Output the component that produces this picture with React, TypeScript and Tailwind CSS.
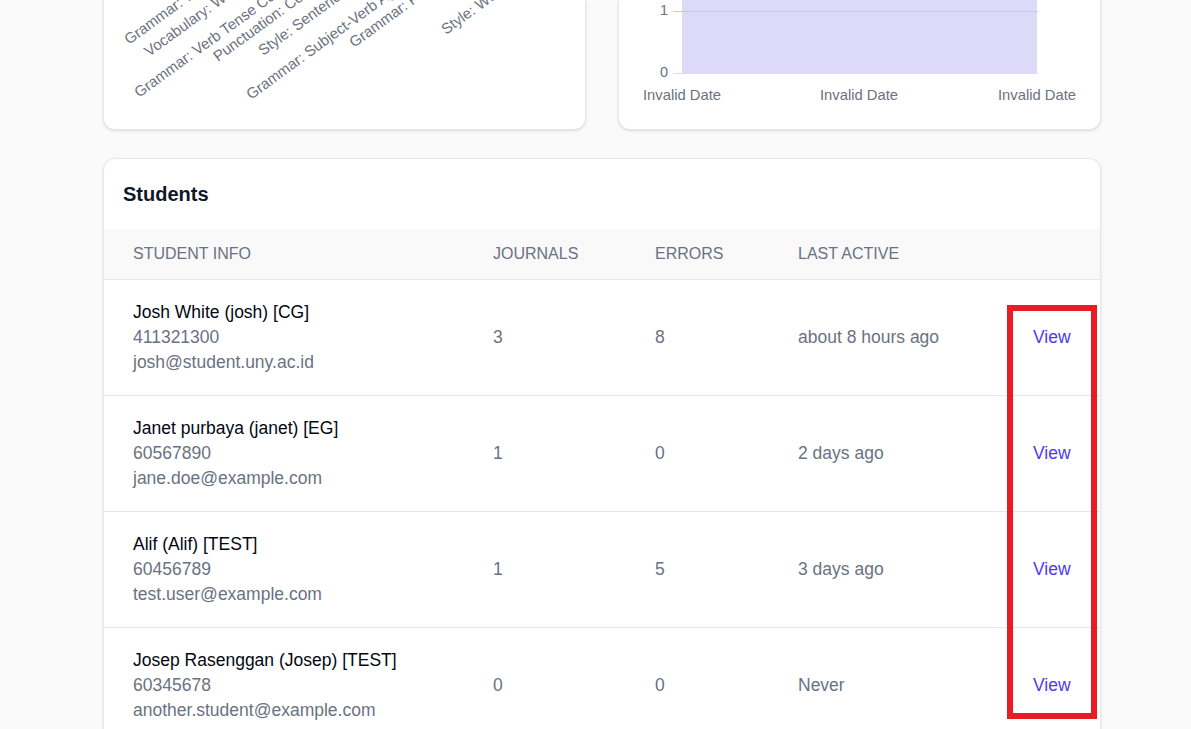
import React from "react";

interface Student {
    name: string;
    id: string;
    email: string;
    journals: number;
    errors: number;
    lastActive: string;
}

const students: Student[] = [
    { name: "Josh White (josh) [CG]", id: "411321300", email: "josh@student.uny.ac.id", journals: 3, errors: 8, lastActive: "about 8 hours ago" },
    { name: "Janet purbaya (janet) [EG]", id: "60567890", email: "jane.doe@example.com", journals: 1, errors: 0, lastActive: "2 days ago" },
    { name: "Alif (Alif) [TEST]", id: "60456789", email: "test.user@example.com", journals: 1, errors: 5, lastActive: "3 days ago" },
    { name: "Josep Rasenggan (Josep) [TEST]", id: "60345678", email: "another.student@example.com", journals: 0, errors: 0, lastActive: "Never" },
];

// rotated category labels, start of baseline in chart coords
const categoryLabels = [
    { text: "Grammar: Word Order", x: 25, y: 45 },
    { text: "Vocabulary: Word Choice", x: 45, y: 57 },
    { text: "Grammar: Verb Tense Consistency", x: 35, y: 98 },
    { text: "Punctuation: Comma Usage", x: 114, y: 62 },
    { text: "Style: Sentence Structure", x: 159, y: 56 },
    { text: "Grammar: Subject-Verb Agreement", x: 147, y: 100 },
    { text: "Grammar: Prepositions", x: 250, y: 48 },
    { text: "Style: Wordiness", x: 342, y: 35 },
];

const ErrorCategoryChart = () => (
    <svg width="483" height="129" className="block">
        {categoryLabels.map((l) => (
            <text
                key={l.text}
                transform={`translate(${l.x} ${l.y}) rotate(-36)`}
                fontSize="15"
                fill="#6b7280"
                fontFamily="Liberation Sans, Arial, sans-serif"
            >
                {l.text}
            </text>
        ))}
    </svg>
);

const ActivityChart = () => (
    <svg width="483" height="129" className="block" fontFamily="Liberation Sans, Arial, sans-serif">
        <rect x="63" y="0" width="355" height="73" fill="#dcdaf8" />
        <line x1="54" y1="11.5" x2="419" y2="11.5" stroke="#c9c7ee" strokeWidth="1" />
        <line x1="54" y1="73.5" x2="419" y2="73.5" stroke="#dcdcec" strokeWidth="1" />
        <text x="49" y="15" textAnchor="end" fontSize="14.5" fill="#6b7280">1</text>
        <text x="49" y="77" textAnchor="end" fontSize="14.5" fill="#6b7280">0</text>
        <text x="63" y="100" textAnchor="middle" fontSize="14.8" fill="#6b7280">Invalid Date</text>
        <text x="240" y="100" textAnchor="middle" fontSize="14.8" fill="#6b7280">Invalid Date</text>
        <text x="418" y="100" textAnchor="middle" fontSize="14.8" fill="#6b7280">Invalid Date</text>
    </svg>
);

const App = () => {
    return (
        <div
            className="min-h-[729px] bg-[#fafafa] text-gray-900"
            style={{ fontFamily: '"Liberation Sans", Arial, sans-serif' }}
        >
            <div className="relative ml-[103px] w-[998px]">
                {/* Charts row */}
                <div className="grid grid-cols-2 gap-8">
                    <div className="h-[130px] overflow-hidden rounded-b-xl border border-t-0 border-gray-200 bg-white shadow-sm">
                        <ErrorCategoryChart />
                    </div>
                    <div className="h-[130px] overflow-hidden rounded-b-xl border border-t-0 border-gray-200 bg-white shadow-sm">
                        <ActivityChart />
                    </div>
                </div>

                {/* Students table */}
                <div className="mt-7 overflow-hidden rounded-xl border border-gray-200 bg-white shadow-sm">
                    <div className="flex h-[70px] items-center px-[19px]">
                        <h2 className="text-xl font-bold text-gray-900">Students</h2>
                    </div>
                    <table className="w-full table-fixed border-collapse text-left">
                        <colgroup>
                            <col className="w-[360px]" />
                            <col className="w-[162px]" />
                            <col className="w-[143px]" />
                            <col className="w-[235px]" />
                            <col />
                        </colgroup>
                        <thead>
                            <tr className="h-[50px] border-b border-gray-200 bg-[#f9f9f9] text-base text-gray-500">
                                <th className="px-[29px] font-normal uppercase">Student Info</th>
                                <th className="px-[29px] font-normal uppercase">Journals</th>
                                <th className="px-[29px] font-normal uppercase">Errors</th>
                                <th className="px-[29px] font-normal uppercase">Last Active</th>
                                <th className="px-[29px]"></th>
                            </tr>
                        </thead>
                        <tbody>
                            {students.map((s) => (
                                <tr key={s.id} className="border-b border-gray-200 text-[17.5px] leading-[25px]">
                                    <td className="px-[29px] py-5">
                                        <div className="text-gray-950">{s.name}</div>
                                        <div className="text-gray-500">{s.id}</div>
                                        <div className="text-gray-500">{s.email}</div>
                                    </td>
                                    <td className="px-[29px] text-gray-500">{s.journals}</td>
                                    <td className="px-[29px] text-gray-500">{s.errors}</td>
                                    <td className="px-[29px] text-gray-500">{s.lastActive}</td>
                                    <td className="px-[29px] text-indigo-600">View</td>
                                </tr>
                            ))}
                        </tbody>
                    </table>
                </div>

                {/* highlight annotation */}
                <div className="pointer-events-none absolute left-[904px] top-[305px] h-[414px] w-[90px] border-[6px] border-[#e81c22]" />
            </div>
        </div>
    );
};

export default App;
